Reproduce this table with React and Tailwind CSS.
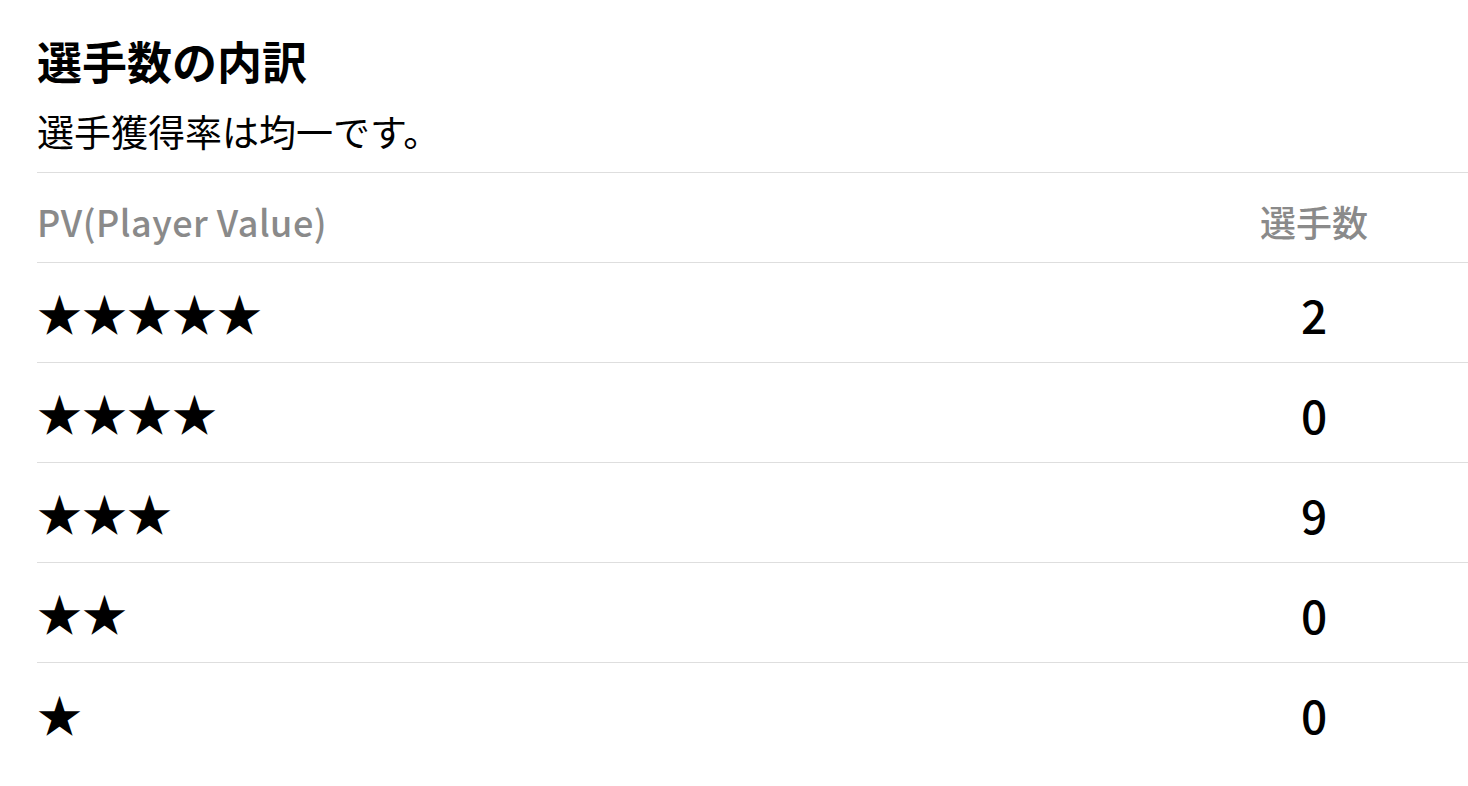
const rows = [
  { stars: 5, count: 2 },
  { stars: 4, count: 0 },
  { stars: 3, count: 9 },
  { stars: 2, count: 0 },
  { stars: 1, count: 0 },
];

const font = {
  fontFamily: '"Noto Sans CJK JP", "Noto Sans", sans-serif',
};

export default function App() {
  return (
    <div className="min-h-screen bg-white pl-[37px] pt-[34px] text-black" style={font}>
      <h2 className="text-[45px] font-bold leading-[54px]">選手数の内訳</h2>
      <p className="mt-[21px] text-[37px] leading-[44px]">選手獲得率は均一です。</p>

      <div className="mt-[19px]">
        <div className="flex h-[91px] items-center border-t border-b border-[#dedede] pt-[6px] text-[36px] font-medium text-[#8a8a8a]">
          <div className="flex-1 tracking-[0.5px]">PV(Player Value)</div>
          <div className="w-[308px] text-center">選手数</div>
        </div>
        {rows.map((row, i) => (
          <div
            key={row.stars}
            className={
              i < rows.length - 1
                ? "flex h-[100px] items-center border-b border-[#dedede]"
                : "flex h-[100px] items-center"
            }
          >
            <div className="flex-1 text-[45px] leading-none">{"★".repeat(row.stars)}</div>
            <div className="w-[308px] pt-[3px] text-center text-[46px] font-medium">{row.count}</div>
          </div>
        ))}
      </div>
    </div>
  );
}
